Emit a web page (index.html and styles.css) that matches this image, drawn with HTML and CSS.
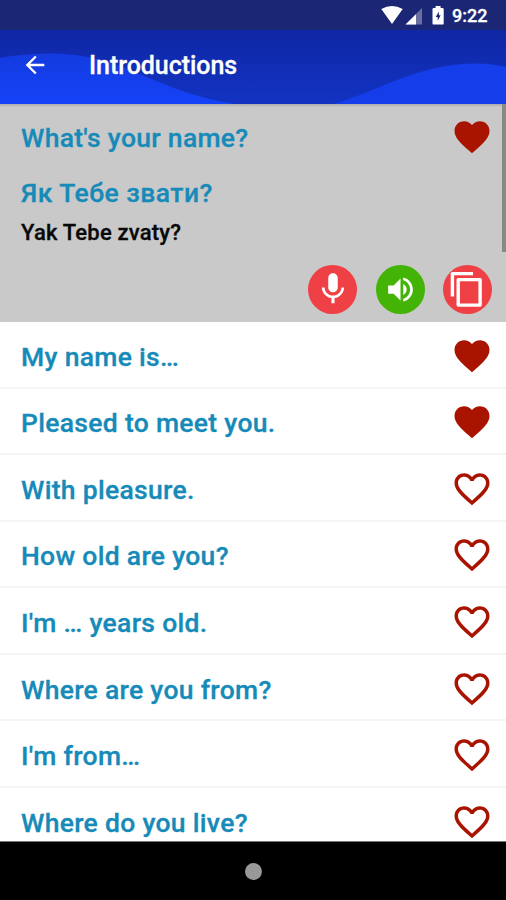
FILE: index.html
```html
<!DOCTYPE html>
<html lang="en">
<head>
<meta charset="utf-8">
<title>Introductions</title>
<link rel="stylesheet" href="styles.css">
</head>
<body>
<svg class="defs" width="0" height="0">
  <symbol id="heart" viewBox="0 0 24 24"><path d="M12 21.35l-1.45-1.32C5.4 15.36 2 12.28 2 8.5 2 5.42 4.42 3 7.5 3c1.74 0 3.41.81 4.5 2.09C13.09 3.81 14.76 3 16.5 3 19.58 3 22 5.42 22 8.5c0 3.78-3.4 6.86-8.55 11.54L12 21.35z"/></symbol>
  <symbol id="heart-outline" viewBox="0 0 24 24"><path d="M16.5 3c-1.74 0-3.41.81-4.5 2.09C10.91 3.81 9.24 3 7.5 3 4.42 3 2 5.42 2 8.5c0 3.78 3.4 6.86 8.55 11.54L12 21.35l1.45-1.32C18.6 15.36 22 12.28 22 8.5 22 5.42 19.58 3 16.5 3zm-4.4 15.55l-.1.1-.1-.1C7.14 14.24 4 11.39 4 8.5 4 6.5 5.5 5 7.5 5c1.54 0 3.04.99 3.57 2.36h1.87C13.46 5.99 14.96 5 16.5 5c2 0 3.5 1.5 3.5 3.5 0 2.89-3.14 5.74-7.9 10.05z"/></symbol>
</svg>
<div class="screen">
  <div class="status">
    <svg width="126" height="30" viewBox="380 0 126 30">
      <path d="M381.300 9Q392 3 402.700 9L392 24z" fill="#fff"/>
      <path d="M422 8v16.500H405.500z" fill="#69709f"/>
      <path d="M416 14.300v10.200H405.500z" fill="#fff"/>
      <path d="M435.600 6h5v2h1.900q1.200 0 1.200 1.200v14.200q0 1.200-1.200 1.200h-8.800q-1.200 0-1.200-1.200V9.200q0-1.200 1.200-1.200h1.900z" fill="#fff"/>
      <path d="M438.900 11.500l-3.200 5.400h2v3.800l3-5.400h-1.800z" fill="#1b2675"/>
    </svg>
    <span class="clock">9:22</span>
  </div>
  <header class="bar">
    <svg class="wave" width="506" height="74" viewBox="0 30 506 74">
      <defs><linearGradient id="blue" x1="0" y1="0" x2="0" y2="1"><stop offset="0" stop-color="#143be0"/><stop offset="1" stop-color="#1442f7"/></linearGradient></defs>
      <path d="M0 58Q22 53.500 50 53.500C125 53.500 150 90 234 104H0z" fill="url(#blue)"/>
      <path d="M333 104C378 92 417 63 478 63.500Q493 63.500 506 67V104z" fill="#153de9"/>
    </svg>
    <svg class="back" width="28" height="28" viewBox="0 0 24 24"><path d="M20 11H7.830l5.590-5.590L12 4l-8 8 8 8 1.410-1.410L7.830 13H20z" fill="#fff"/></svg>
    <h1>Introductions</h1>
  </header>
  <main class="list">
    <section class="open">
      <div class="row first"><span>What's your name?</span><svg class="heart"><use href="#heart"/></svg></div>
      <p class="translation" lang="uk">Як Тебе звати?</p>
      <p class="reading">Yak Tebe zvaty?</p>
      <div class="actions">
        <span class="round"><svg width="38" height="38" viewBox="0 0 24 24"><path d="M12 14c1.660 0 3-1.340 3-3V5c0-1.660-1.340-3-3-3S9 3.340 9 5v6c0 1.660 1.340 3 3 3zm5.300-3c0 3-2.540 5.100-5.300 5.100S6.700 14 6.700 11H5c0 3.410 2.720 6.230 6 6.720V21h2v-3.280c3.280-.48 6-3.300 6-6.720z"/></svg></span>
        <span class="round green"><svg width="33" height="33" viewBox="0 0 24 24"><path d="M3 9v6h4l5 5V4L7 9zM16.500 12c0-1.770-1.020-3.290-2.500-4.030v8.050c1.480-.73 2.500-2.250 2.500-4.020zM14 3.230v2.060c2.890.86 5 3.540 5 6.710s-2.110 5.850-5 6.710v2.060c4.010-.91 7-4.490 7-8.770s-2.990-7.860-7-8.770z"/></svg></span>
        <span class="round"><svg width="49" height="49" viewBox="0 0 49 49"><path d="M9.400 31.500V8.600H30M15.200 14.600h21.900v25.500H15.200z" class="line"/></svg></span>
      </div>
      <i class="thumb"></i>
    </section>
    <div class="row"><span>My name is…</span><svg class="heart"><use href="#heart"/></svg></div>
    <div class="row"><span>Pleased to meet you.</span><svg class="heart"><use href="#heart"/></svg></div>
    <div class="row"><span>With pleasure.</span><svg class="heart"><use href="#heart-outline"/></svg></div>
    <div class="row"><span>How old are you?</span><svg class="heart"><use href="#heart-outline"/></svg></div>
    <div class="row"><span>I'm … years old.</span><svg class="heart"><use href="#heart-outline"/></svg></div>
    <div class="row"><span>Where are you from?</span><svg class="heart"><use href="#heart-outline"/></svg></div>
    <div class="row"><span>I'm from…</span><svg class="heart"><use href="#heart-outline"/></svg></div>
    <div class="row"><span>Where do you live?</span><svg class="heart"><use href="#heart-outline"/></svg></div>
  </main>
  <footer class="nav"><i class="home"></i></footer>
</div>
</body>
</html>
```
FILE: styles.css
```css
* { box-sizing: border-box; }
body { margin: 0; font-family: Roboto, "Liberation Sans", sans-serif; font-weight: 500; -webkit-text-stroke: 0.3px; }
.defs { position: absolute; }
.screen { display: flex; flex-direction: column; width: 506px; height: 900px; overflow: hidden; background: #fff; }
.status { display: flex; position: relative; flex: none; justify-content: flex-end; height: 30px; background: #1b2675; }
.clock { position: absolute; right: 18.500px; top: 4px; color: #fff; font-size: 18px; line-height: 24px; }
.bar { display: flex; position: relative; flex: none; align-items: center; height: 74px; padding-left: 21px; background: linear-gradient(#0f27a5, #1233c2); }
.wave { position: absolute; inset: 0; }
.back { position: relative; margin-top: -4px; }
h1 { position: relative; margin: -3px 0 0 40px; color: #fff; font-size: 25px; font-weight: 500; letter-spacing: -0.05px; line-height: 30px; }
.list { flex: 1; min-height: 0; overflow: hidden; border-bottom: 1px solid #777; }
.open { position: relative; height: 218px; background: linear-gradient(#aaa, #c9c9c9 3px); }
.row { display: flex; align-items: center; justify-content: space-between; height: 66.55px; padding: 5px 13px 0 21px; border-bottom: 2px solid #f5f5f5; color: #168ab8; font-size: 26.5px; letter-spacing: 0.3px; line-height: 34px; white-space: nowrap; }
.row.first { padding-top: 3px; border-color: transparent; }
.heart { width: 42px; height: 42px; margin-top: -2px; fill: #a91400; }
.translation, .reading { margin: 0 0 0 21px; }
.translation { padding-top: 5px; color: #168ab8; font-size: 26.5px; letter-spacing: 0.45px; line-height: 34px; }
.reading { padding-top: 9px; color: #080808; font-size: 22px; letter-spacing: 0.2px; line-height: 28px; }
.actions { display: flex; justify-content: flex-end; gap: 18.500px; margin: 18px 14px 0 0; }
.round { display: flex; align-items: center; justify-content: center; width: 49px; height: 49px; border-radius: 50%; background: #ef4045; fill: #fff; }
.green { background: #43b405; }
.line { fill: none; stroke: #fff; stroke-width: 3.4; stroke-linejoin: round; }
.thumb { position: absolute; top: 0; right: 0; width: 4.500px; height: 148px; background: #888; }
.nav { display: flex; flex: none; align-items: center; justify-content: center; height: 58px; background: #000; }
.home { width: 17px; height: 17px; border-radius: 50%; background: #999; }
```
